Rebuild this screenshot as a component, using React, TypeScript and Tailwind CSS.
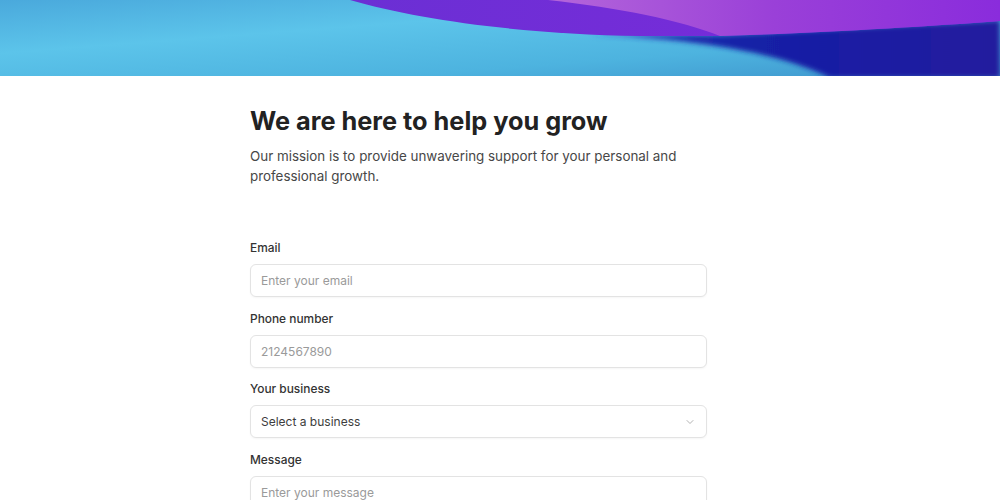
import { ChevronDown } from "lucide-react";

const Banner = () => (
  <div className="h-[76px] w-full overflow-hidden">
    <svg viewBox="0 0 1000 76" preserveAspectRatio="none" className="block h-full w-full">
      <defs>
        <linearGradient id="sky" x1="0" y1="0" x2="1" y2="1">
          <stop offset="0" stopColor="#4aa9dc" />
          <stop offset="0.35" stopColor="#5cc4ea" />
          <stop offset="0.7" stopColor="#4db3df" />
          <stop offset="1" stopColor="#3d94cc" />
        </linearGradient>
        <linearGradient id="deep" x1="0" y1="0" x2="1" y2="0">
          <stop offset="0" stopColor="#2a3fb8" />
          <stop offset="0.4" stopColor="#1420a6" />
          <stop offset="1" stopColor="#241a9e" />
        </linearGradient>
        <linearGradient id="violet" x1="0" y1="0" x2="1" y2="0">
          <stop offset="0" stopColor="#6b2fd4" />
          <stop offset="1" stopColor="#7d2adc" />
        </linearGradient>
        <linearGradient id="lilac" x1="0" y1="0" x2="1" y2="0">
          <stop offset="0" stopColor="#b466da" />
          <stop offset="0.5" stopColor="#9a40d8" />
          <stop offset="1" stopColor="#8a2cdc" />
        </linearGradient>
        <filter id="soft" x="-5%" y="-20%" width="110%" height="140%">
          <feGaussianBlur stdDeviation="2.5" />
        </filter>
      </defs>
      <rect width="1000" height="76" fill="url(#sky)" />
      <path d="M590 35 C 700 38, 790 56, 830 78 L 1000 78 L 1000 20 L 720 35 Z" fill="url(#deep)" filter="url(#soft)" />
      <path d="M350 0 C 420 20, 520 34, 640 36 L 720 36 C 820 33, 920 27, 1000 21 L 1000 0 Z" fill="url(#violet)" />
      <path d="M548 0 C 620 8, 680 20, 720 36 C 820 33, 920 27, 1000 21 L 1000 0 Z" fill="url(#lilac)" />
    </svg>
  </div>
);

const Field = ({ label, children }: { label: string; children: React.ReactNode }) => (
  <div className="flex flex-col">
    <label className="text-[11.9px] leading-5 font-medium text-[#333333] pt-px">{label}</label>
    <div className="mt-[6px]">{children}</div>
  </div>
);

const inputClass =
  "h-[33px] w-full rounded-md border border-[#e3e3e3] bg-white px-[10px] text-[12px] text-[#333333] placeholder:text-[#9a9a9a] shadow-[0_1px_2px_rgba(0,0,0,0.04)] outline-none";

export default function App() {
  return (
    <div className="min-h-[500px] bg-white font-['Inter',sans-serif]">
      <Banner />
      <div className="mx-auto w-[500px] pt-[27px]">
        <div className="w-[457px]">
          <h1 className="text-[25.3px] leading-9 font-bold text-[#222222]">
            We are here to help you grow
          </h1>
          <p className="mt-[7px] text-[13.4px] leading-5 text-[#474747]">
            Our mission is to provide unwavering support for your personal and professional growth.
          </p>

          <form className="mt-[51px] flex flex-col gap-[10.5px]">
            <Field label="Email">
              <input className={inputClass} placeholder="Enter your email" />
            </Field>
            <Field label="Phone number">
              <input className={inputClass} placeholder="2124567890" />
            </Field>
            <Field label="Your business">
              <div className={`${inputClass} flex items-center justify-between`}>
                <span className="text-[#3d3d3d]">Select a business</span>
                <ChevronDown className="h-3 w-3 text-[#9a9a9a]" strokeWidth={1.5} />
              </div>
            </Field>
            <Field label="Message">
              <textarea
                className="h-[90px] w-full resize-none rounded-md border border-[#e3e3e3] bg-white px-[10px] py-[6px] text-[12px] leading-5 placeholder:text-[#9a9a9a] shadow-[0_1px_2px_rgba(0,0,0,0.04)] outline-none"
                placeholder="Enter your message"
              />
            </Field>
          </form>
        </div>
      </div>
    </div>
  );
}
